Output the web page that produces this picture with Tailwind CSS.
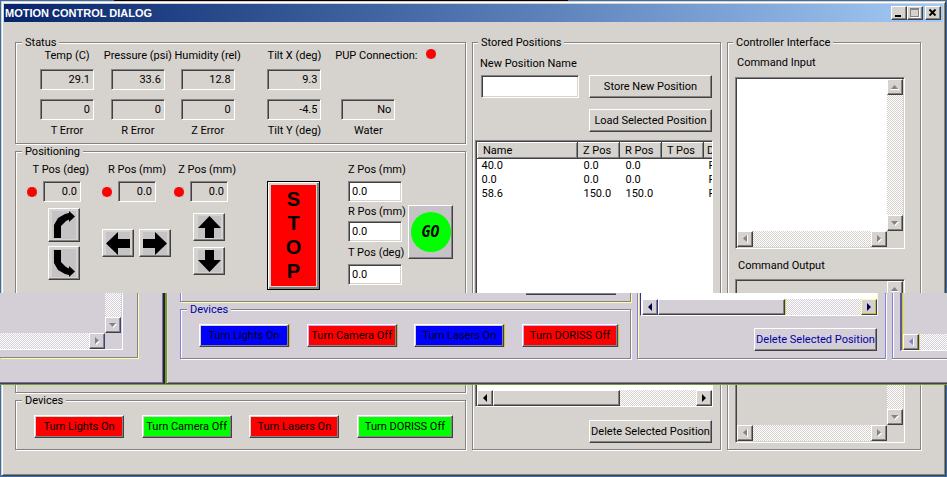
<!DOCTYPE html>
<html lang="en">
<head>
    <meta charset="UTF-8">
    <meta name="viewport" content="width=device-width, initial-scale=1.0">
    <title>Motion Control Dialog</title>
    <script src="https://cdn.jsdelivr.net/npm/@tailwindcss/browser@4"></script>
</head>
<body class="bg-[#3a6ea5] font-[Roboto,'Liberation_Sans',sans-serif] text-[11px] leading-[14px] text-black">

    <!-- Shared glyphs -->
    <svg class="hidden">
        <symbol id="tri-up" viewBox="0 0 8 8"><path d="M0 7h8v-1H0z" fill="#fff"/><path d="M0 6 3.500 2 7 6z"/></symbol>
        <symbol id="tri-down" viewBox="0 0 8 8"><path d="M1 3h7L4.500 7z" fill="#fff"/><path d="M0 2h7L3.500 6z"/></symbol>
        <symbol id="tri-left" viewBox="0 0 8 8"><path d="M6 0h1v8H6z" fill="#fff"/><path d="M6 0v7L2 3.500z"/></symbol>
        <symbol id="tri-right" viewBox="0 0 8 8"><path d="M3 1v7l4-3.500z" fill="#fff"/><path d="M2 0v7l4-3.500z"/></symbol>
        <symbol id="solid-left" viewBox="0 0 8 8"><path d="M6 0v8L2 4z"/></symbol>
        <symbol id="solid-right" viewBox="0 0 8 8"><path d="M2 0v8l4-4z"/></symbol>
        <symbol id="led" viewBox="0 0 10 10"><path d="M0 0h10v10H0z" fill="#c6c3c6"/><circle cx="5" cy="5" r="5" fill="#f00"/></symbol>
    </svg>

    <div class="relative flex min-h-screen flex-col">
        <div class="mr-[40%] ml-[12%] h-px bg-black"></div>

        <div class="mx-px mb-px flex flex-1 flex-col border border-[#d6d3ce] border-r-[#424142] border-b-[#424142] bg-[#d6d3ce] p-[2px] shadow-[inset_1px_1px_0_#fff,inset_-1px_-1px_0_#848284]">
            <!-- Title bar -->
            <header class="flex h-[18px] items-center justify-between bg-linear-to-r from-[#08246b] to-[#a5cbf7] pr-[2px] pl-px">
                <h1 class="font-['Liberation_Sans',Arial,sans-serif] font-bold text-white">MOTION CONTROL DIALOG</h1>
                <div class="flex">
                    <button type="button" aria-label="Minimize" class="flex h-[14px] w-4 items-center justify-center border border-white border-r-[#424142] border-b-[#424142] bg-[#d6d3ce] shadow-[inset_-1px_-1px_0_#848284]"><svg class="h-[10px] w-[10px]" viewBox="0 0 10 10"><path d="M1 7h6v2H1z"/></svg></button>
                    <button type="button" aria-label="Maximize" disabled class="flex h-[14px] w-4 items-center justify-center border border-white border-r-[#424142] border-b-[#424142] bg-[#d6d3ce] shadow-[inset_-1px_-1px_0_#848284]"><svg class="h-[10px] w-[10px]" viewBox="0 0 10 10"><path d="M1 1h9v9H1z" fill="#fff"/><path d="M0 0h9v9H0z" fill="#848284"/><path d="M1 2h7v6H1z" fill="#d6d3ce"/></svg></button>
                    <button type="button" aria-label="Close" class="ml-[2px] flex h-[14px] w-4 items-center justify-center border border-white border-r-[#424142] border-b-[#424142] bg-[#d6d3ce] shadow-[inset_-1px_-1px_0_#848284]"><svg class="h-[10px] w-[10px]" viewBox="0 0 10 10"><path d="M1.500 1.500l6 6M7.500 1.500l-6 6" stroke="#000" stroke-width="1.800"/></svg></button>
                </div>
            </header>

            <main class="grid flex-1 grid-cols-[451fr_249fr_194fr] gap-x-[6px] pt-[14px] pr-[22px] pb-[23px] pl-[11px]">
                <div class="flex min-w-0 flex-col">
                    <!-- Status -->
                    <fieldset class="min-w-0 border border-[#848284] pb-[5px] pl-6 shadow-[1px_1px_0_#fff,inset_1px_1px_0_#fff]">
                        <legend class="-ml-[18px] bg-[#d6d3ce] px-[3px] leading-[13px]">Status</legend>
                        <div class="grid grid-cols-[71fr_70fr_87fr_68fr_130fr] gap-y-[9px]">
                            <div class="flex w-[54px] flex-col items-center gap-[6px]">
                                <label for="temp" class="whitespace-nowrap">Temp (C)</label>
                                <input id="temp" readonly value="29.1" class="h-[21px] w-full border border-[#848284] border-r-white border-b-white px-[3px] text-right shadow-[inset_1px_1px_0_#424142]">
                            </div>
                            <div class="flex w-[54px] flex-col items-center gap-[6px]">
                                <label for="pressure" class="whitespace-nowrap">Pressure (psi)</label>
                                <input id="pressure" readonly value="33.6" class="h-[21px] w-full border border-[#848284] border-r-white border-b-white px-[3px] text-right shadow-[inset_1px_1px_0_#424142]">
                            </div>
                            <div class="flex w-[54px] flex-col items-center gap-[6px]">
                                <label for="humidity" class="whitespace-nowrap">Humidity (rel)</label>
                                <input id="humidity" readonly value="12.8" class="h-[21px] w-full border border-[#848284] border-r-white border-b-white px-[3px] text-right shadow-[inset_1px_1px_0_#424142]">
                            </div>
                            <div class="flex w-[54px] flex-col items-center gap-[6px]">
                                <label for="tilt-x" class="whitespace-nowrap">Tilt X (deg)</label>
                                <input id="tilt-x" readonly value="9.3" class="h-[21px] w-full border border-[#848284] border-r-white border-b-white px-[3px] text-right shadow-[inset_1px_1px_0_#424142]">
                            </div>
                            <div class="flex items-start gap-2 whitespace-nowrap">
                                <span>PUP Connection:</span>
                                <svg class="h-[10px] w-[10px]"><use href="#led"/></svg>
                            </div>
                            <div class="flex w-[54px] flex-col items-center gap-1">
                                <input id="t-error" readonly value="0" class="h-[21px] w-full border border-[#848284] border-r-white border-b-white px-[3px] text-right shadow-[inset_1px_1px_0_#424142]">
                                <label for="t-error">T Error</label>
                            </div>
                            <div class="flex w-[54px] flex-col items-center gap-1">
                                <input id="r-error" readonly value="0" class="h-[21px] w-full border border-[#848284] border-r-white border-b-white px-[3px] text-right shadow-[inset_1px_1px_0_#424142]">
                                <label for="r-error">R Error</label>
                            </div>
                            <div class="flex w-[54px] flex-col items-center gap-1">
                                <input id="z-error" readonly value="0" class="h-[21px] w-full border border-[#848284] border-r-white border-b-white px-[3px] text-right shadow-[inset_1px_1px_0_#424142]">
                                <label for="z-error">Z Error</label>
                            </div>
                            <div class="flex w-[54px] flex-col items-center gap-1">
                                <input id="tilt-y" readonly value="-4.5" class="h-[21px] w-full border border-[#848284] border-r-white border-b-white px-[3px] text-right shadow-[inset_1px_1px_0_#424142]">
                                <label for="tilt-y" class="whitespace-nowrap">Tilt Y (deg)</label>
                            </div>
                            <div class="ml-[6px] flex w-[54px] flex-col items-center gap-1">
                                <input id="water" readonly value="No" class="h-[21px] w-full border border-[#848284] border-r-white border-b-white px-[3px] text-right shadow-[inset_1px_1px_0_#424142]">
                                <label for="water">Water</label>
                            </div>
                        </div>
                    </fieldset>

                    <!-- Positioning -->
                    <fieldset class="mt-px flex min-w-0 flex-1 flex-col justify-between border border-[#848284] pl-[11px] shadow-[1px_1px_0_#fff,inset_1px_1px_0_#fff]">
                        <legend class="-ml-[5px] bg-[#d6d3ce] px-[3px] leading-[13px]">Positioning</legend>
                        <div class="grid grid-cols-[75fr_72fr_93fr_81fr_60fr_57fr] pt-[5px]">
                            <div class="flex w-[62px] flex-col">
                                <label for="t-now" class="text-right whitespace-nowrap">T Pos (deg)</label>
                                <div class="mt-1 flex items-center gap-[6px]">
                                    <svg class="h-[10px] w-[10px] shrink-0"><use href="#led"/></svg>
                                    <input id="t-now" readonly value="0.0" class="h-[21px] w-[38px] border border-[#848284] border-r-white border-b-white px-[3px] text-right shadow-[inset_1px_1px_0_#424142]">
                                </div>
                                <button type="button" aria-label="Rotate clockwise" class="mt-[6px] ml-[21px] flex h-[34px] w-8 items-center justify-center border border-white border-r-[#424142] border-b-[#424142] shadow-[inset_-1px_-1px_0_#848284]">
                                    <svg class="h-7 w-6 bg-[#c6c3c6]" viewBox="0 0 24 28"><path d="M2 27V14l4-7 7-4 4-1V0l6 5.500-6 5.500V8.500L14 10l-5 5v12z"/></svg>
                                </button>
                                <button type="button" aria-label="Rotate counterclockwise" class="mt-1 ml-[21px] flex h-[34px] w-8 items-center justify-center border border-white border-r-[#424142] border-b-[#424142] shadow-[inset_-1px_-1px_0_#848284]">
                                    <svg class="h-7 w-6 bg-[#c6c3c6]" viewBox="0 0 24 28"><path d="M2 1v13l4 7 7 4 4 1v2l6-5.500-6-5.500v2.500L14 18l-5-5V1z"/></svg>
                                </button>
                            </div>
                            <div class="flex w-[70px] flex-col">
                                <label for="r-now" class="text-center whitespace-nowrap">R Pos (mm)</label>
                                <div class="mt-1 flex items-center gap-[6px]">
                                    <svg class="h-[10px] w-[10px] shrink-0"><use href="#led"/></svg>
                                    <input id="r-now" readonly value="0.0" class="h-[21px] w-[38px] border border-[#848284] border-r-white border-b-white px-[3px] text-right shadow-[inset_1px_1px_0_#424142]">
                                </div>
                                <div class="mt-[27px] flex gap-[5px]">
                                    <button type="button" aria-label="Move left" class="flex h-7 w-8 items-center justify-center border border-white border-r-[#424142] border-b-[#424142] shadow-[inset_-1px_-1px_0_#848284]">
                                        <svg class="h-[23px] w-6 bg-[#c6c3c6]" viewBox="0 0 24 23"><path d="M0 11.500 12 0v7h12v9H12v7z"/></svg>
                                    </button>
                                    <button type="button" aria-label="Move right" class="flex h-7 w-8 items-center justify-center border border-white border-r-[#424142] border-b-[#424142] shadow-[inset_-1px_-1px_0_#848284]">
                                        <svg class="h-[23px] w-6 bg-[#c6c3c6]" viewBox="0 0 24 23"><path d="M24 11.500 12 0v7H0v9h12v7z"/></svg>
                                    </button>
                                </div>
                            </div>
                            <div class="flex w-[62px] flex-col">
                                <label for="z-now" class="text-right whitespace-nowrap">Z Pos (mm)</label>
                                <div class="mt-1 flex items-center gap-[6px]">
                                    <svg class="h-[10px] w-[10px] shrink-0"><use href="#led"/></svg>
                                    <input id="z-now" readonly value="0.0" class="h-[21px] w-[38px] border border-[#848284] border-r-white border-b-white px-[3px] text-right shadow-[inset_1px_1px_0_#424142]">
                                </div>
                                <button type="button" aria-label="Move up" class="mt-[11px] ml-[19px] flex h-7 w-8 items-center justify-center border border-white border-r-[#424142] border-b-[#424142] shadow-[inset_-1px_-1px_0_#848284]">
                                    <svg class="h-[22px] w-[23px] bg-[#c6c3c6]" viewBox="0 0 23 22"><path d="M11.500 0 23 12h-7v10H7V12H0z"/></svg>
                                </button>
                                <button type="button" aria-label="Move down" class="mt-[6px] ml-[19px] flex h-7 w-8 items-center justify-center border border-white border-r-[#424142] border-b-[#424142] shadow-[inset_-1px_-1px_0_#848284]">
                                    <svg class="h-[22px] w-[23px] bg-[#c6c3c6]" viewBox="0 0 23 22"><path d="M11.500 22 23 10h-7V0H7v10H0z"/></svg>
                                </button>
                            </div>
                            <div class="pt-[18px]">
                                <button type="button" class="flex h-[109px] w-[53px] border border-black bg-[#d6d3ce] p-[3px] shadow-[inset_1px_1px_0_#fff,inset_-2px_-2px_0_#848284]">
                                    <span class="flex h-full w-full flex-col items-center justify-center bg-[#f00] pb-[2px] font-['Liberation_Sans',Arial,sans-serif] text-xl leading-6 font-bold"><span>S</span><span>T</span><span>O</span><span>P</span></span>
                                </button>
                            </div>
                            <div class="flex w-[54px] flex-col">
                                <label for="z-go" class="mb-1 whitespace-nowrap">Z Pos (mm)</label>
                                <input id="z-go" value="0.0" class="h-[21px] w-full border border-[#848284] border-r-white border-b-white bg-white px-[3px] shadow-[inset_1px_1px_0_#424142,inset_-1px_-1px_0_#d6d3ce]">
                                <label for="r-go" class="mt-[3px] mb-[2px] whitespace-nowrap">R Pos (mm)</label>
                                <input id="r-go" value="0.0" class="h-[21px] w-full border border-[#848284] border-r-white border-b-white bg-white px-[3px] shadow-[inset_1px_1px_0_#424142,inset_-1px_-1px_0_#d6d3ce]">
                                <label for="t-go" class="mt-1 mb-1 whitespace-nowrap">T Pos (deg)</label>
                                <input id="t-go" value="0.0" class="h-[21px] w-full border border-[#848284] border-r-white border-b-white bg-white px-[3px] shadow-[inset_1px_1px_0_#424142,inset_-1px_-1px_0_#d6d3ce]">
                            </div>
                            <div class="pt-[42px]">
                                <button type="button" class="flex h-[54px] w-[45px] items-center justify-center border border-white border-r-[#424142] border-b-[#424142] bg-[#c6c3c6] shadow-[inset_-1px_-1px_0_#848284]">
                                    <span class="flex h-10 w-10 items-center justify-center rounded-full bg-[#0f0] font-['DejaVu_Sans_Mono',monospace] text-[15px] font-bold italic">GO</span>
                                </button>
                            </div>
                        </div>
                        <button type="button" class="mr-[14px] mb-[7px] h-[23px] w-[90px] self-end border border-white border-r-[#424142] border-b-[#424142] shadow-[inset_-1px_-1px_0_#848284]"></button>
                    </fieldset>

                    <!-- Devices -->
                    <fieldset class="mt-px min-w-0 border border-[#848284] pb-[11px] pl-[11px] shadow-[1px_1px_0_#fff,inset_1px_1px_0_#fff]">
                        <legend class="-ml-[5px] bg-[#d6d3ce] px-[3px] leading-[13px]">Devices</legend>
                        <div class="flex justify-between pt-2 pr-3 pl-[7px] whitespace-nowrap">
                            <button type="button" class="h-[23px] w-[90px] border border-white border-r-[#424142] border-b-[#424142] bg-[#f00] shadow-[inset_-1px_-1px_0_#848284,inset_1px_1px_0_#d6d3ce]">Turn Lights On</button>
                            <button type="button" class="h-[23px] w-[90px] border border-white border-r-[#424142] border-b-[#424142] bg-[#0f0] shadow-[inset_-1px_-1px_0_#848284,inset_1px_1px_0_#d6d3ce]">Turn Camera Off</button>
                            <button type="button" class="h-[23px] w-[90px] border border-white border-r-[#424142] border-b-[#424142] bg-[#f00] shadow-[inset_-1px_-1px_0_#848284,inset_1px_1px_0_#d6d3ce]">Turn Lasers On</button>
                            <button type="button" class="h-[23px] w-24 border border-white border-r-[#424142] border-b-[#424142] bg-[#0f0] shadow-[inset_-1px_-1px_0_#848284,inset_1px_1px_0_#d6d3ce]">Turn DORISS Off</button>
                        </div>
                    </fieldset>
                </div>

                <!-- Stored Positions -->
                <fieldset class="flex min-w-0 flex-col border border-[#848284] pr-[7px] pb-[6px] pl-[2px] shadow-[1px_1px_0_#fff,inset_1px_1px_0_#fff]">
                    <legend class="ml-[3px] bg-[#d6d3ce] px-[3px] leading-[13px]">Stored Positions</legend>
                    <label for="new-name" class="mt-2 mb-1 ml-[5px]">New Position Name</label>
                    <div class="flex justify-between pl-[6px]">
                        <input id="new-name" class="h-[23px] w-[98px] border border-[#848284] border-r-white border-b-white bg-white px-1 shadow-[inset_1px_1px_0_#424142,inset_-1px_-1px_0_#d6d3ce]">
                        <button type="button" class="mr-px h-[23px] w-[123px] border border-white border-r-[#424142] border-b-[#424142] whitespace-nowrap shadow-[inset_-1px_-1px_0_#848284]">Store New Position</button>
                    </div>
                    <button type="button" class="mt-[11px] mr-px h-[23px] w-[123px] self-end border border-white border-r-[#424142] border-b-[#424142] whitespace-nowrap shadow-[inset_-1px_-1px_0_#848284]">Load Selected Position</button>
                    <div class="mt-2 flex flex-1 flex-col overflow-hidden border border-[#848284] border-r-white border-b-white bg-white pt-px pl-px shadow-[inset_1px_1px_0_#424142]">
                        <div class="flex-1 overflow-hidden">
                            <table class="w-[286px] table-fixed text-left">
                                <colgroup><col class="w-[100px]"><col class="w-[42px]"><col class="w-[42px]"><col class="w-[42px]"><col class="w-[60px]"></colgroup>
                                <thead class="bg-[#d6d3ce]">
                                    <tr class="h-4">
                                        <th class="border border-white border-r-[#424142] border-b-[#424142] pl-[5px] font-normal shadow-[inset_-1px_-1px_0_#848284]">Name</th>
                                        <th class="border border-white border-r-[#424142] border-b-[#424142] pl-[5px] font-normal shadow-[inset_-1px_-1px_0_#848284]">Z Pos</th>
                                        <th class="border border-white border-r-[#424142] border-b-[#424142] pl-[5px] font-normal shadow-[inset_-1px_-1px_0_#848284]">R Pos</th>
                                        <th class="border border-white border-r-[#424142] border-b-[#424142] pl-[5px] font-normal shadow-[inset_-1px_-1px_0_#848284]">T Pos</th>
                                        <th class="border border-white border-r-[#424142] border-b-[#424142] pl-[3px] font-normal shadow-[inset_-1px_-1px_0_#848284]">D</th>
                                    </tr>
                                </thead>
                                <tbody>
                                    <tr><td class="pl-1">40.0</td><td class="pl-[6px]">0.0</td><td class="pl-[6px]">0.0</td><td></td><td class="pl-[5px]">F</td></tr>
                                    <tr><td class="pl-1">0.0</td><td class="pl-[6px]">0.0</td><td class="pl-[6px]">0.0</td><td></td><td class="pl-[5px]">F</td></tr>
                                    <tr><td class="pl-1">58.6</td><td class="pl-[6px]">150.0</td><td class="pl-[6px]">150.0</td><td></td><td class="pl-[5px]">F</td></tr>
                                </tbody>
                            </table>
                        </div>
                        <div class="flex h-4 bg-[repeating-conic-gradient(#fff_0_25%,#d6d3ce_0_50%)] bg-size-[2px_2px]">
                            <button type="button" aria-label="Scroll left" class="flex h-4 w-4 items-center justify-center border border-white border-r-[#424142] border-b-[#424142] bg-[#d6d3ce] shadow-[inset_-1px_-1px_0_#848284]"><svg class="h-2 w-2"><use href="#solid-left"/></svg></button>
                            <div class="w-[127px] border border-white border-r-[#424142] border-b-[#424142] bg-[#d6d3ce] shadow-[inset_-1px_-1px_0_#848284]"></div>
                            <button type="button" aria-label="Scroll right" class="ml-auto flex h-4 w-4 items-center justify-center border border-white border-r-[#424142] border-b-[#424142] bg-[#d6d3ce] shadow-[inset_-1px_-1px_0_#848284]"><svg class="h-2 w-2"><use href="#solid-right"/></svg></button>
                        </div>
                    </div>
                    <button type="button" class="mt-[13px] mr-px h-[23px] w-[123px] self-end border border-white border-r-[#424142] border-b-[#424142] whitespace-nowrap shadow-[inset_-1px_-1px_0_#848284]">Delete Selected Position</button>
                </fieldset>

                <!-- Controller Interface -->
                <fieldset class="flex min-w-0 flex-col border border-[#848284] pr-[15px] pb-[6px] pl-[7px] shadow-[1px_1px_0_#fff,inset_1px_1px_0_#fff]">
                    <legend class="-ml-[2px] bg-[#d6d3ce] px-[3px] leading-[13px]">Controller Interface</legend>
                    <label for="command-input" class="mt-[7px] mb-[7px] ml-[2px]">Command Input</label>
                    <div class="grid flex-[172] grid-cols-[1fr_16px] grid-rows-[1fr_16px] border border-[#848284] border-r-white border-b-white p-px shadow-[inset_1px_1px_0_#424142]">
                        <textarea id="command-input" class="h-full w-full resize-none overflow-hidden bg-white px-1"></textarea>
                        <div class="flex flex-col justify-between bg-[repeating-conic-gradient(#fff_0_25%,#d6d3ce_0_50%)] bg-size-[2px_2px]">
                            <button type="button" disabled aria-label="Scroll up" class="flex h-4 w-4 items-center justify-center border border-white border-r-[#424142] border-b-[#424142] bg-[#d6d3ce] shadow-[inset_-1px_-1px_0_#848284]"><svg class="h-2 w-2 fill-[#848284]"><use href="#tri-up"/></svg></button>
                            <button type="button" disabled aria-label="Scroll down" class="flex h-4 w-4 items-center justify-center border border-white border-r-[#424142] border-b-[#424142] bg-[#d6d3ce] shadow-[inset_-1px_-1px_0_#848284]"><svg class="h-2 w-2 fill-[#848284]"><use href="#tri-down"/></svg></button>
                        </div>
                        <div class="flex justify-between bg-[repeating-conic-gradient(#fff_0_25%,#d6d3ce_0_50%)] bg-size-[2px_2px]">
                            <button type="button" disabled aria-label="Scroll left" class="flex h-4 w-4 items-center justify-center border border-white border-r-[#424142] border-b-[#424142] bg-[#d6d3ce] shadow-[inset_-1px_-1px_0_#848284]"><svg class="h-2 w-2 fill-[#848284]"><use href="#tri-left"/></svg></button>
                            <button type="button" disabled aria-label="Scroll right" class="flex h-4 w-4 items-center justify-center border border-white border-r-[#424142] border-b-[#424142] bg-[#d6d3ce] shadow-[inset_-1px_-1px_0_#848284]"><svg class="h-2 w-2 fill-[#848284]"><use href="#tri-right"/></svg></button>
                        </div>
                    </div>
                    <label for="command-output" class="mt-[10px] mb-[6px] ml-[3px]">Command Output</label>
                    <div class="grid flex-[163] grid-cols-[1fr_16px] grid-rows-[1fr_16px] border border-[#848284] border-r-white border-b-white p-px shadow-[inset_1px_1px_0_#424142]">
                        <textarea id="command-output" readonly class="h-full w-full resize-none overflow-hidden px-1"></textarea>
                        <div class="flex flex-col justify-between bg-[repeating-conic-gradient(#fff_0_25%,#d6d3ce_0_50%)] bg-size-[2px_2px]">
                            <button type="button" disabled aria-label="Scroll up" class="flex h-4 w-4 items-center justify-center border border-white border-r-[#424142] border-b-[#424142] bg-[#d6d3ce] shadow-[inset_-1px_-1px_0_#848284]"><svg class="h-2 w-2 fill-[#848284]"><use href="#tri-up"/></svg></button>
                            <button type="button" disabled aria-label="Scroll down" class="flex h-4 w-4 items-center justify-center border border-white border-r-[#424142] border-b-[#424142] bg-[#d6d3ce] shadow-[inset_-1px_-1px_0_#848284]"><svg class="h-2 w-2 fill-[#848284]"><use href="#tri-down"/></svg></button>
                        </div>
                        <div class="flex justify-between bg-[repeating-conic-gradient(#fff_0_25%,#d6d3ce_0_50%)] bg-size-[2px_2px]">
                            <button type="button" disabled aria-label="Scroll left" class="flex h-4 w-4 items-center justify-center border border-white border-r-[#424142] border-b-[#424142] bg-[#d6d3ce] shadow-[inset_-1px_-1px_0_#848284]"><svg class="h-2 w-2 fill-[#848284]"><use href="#tri-left"/></svg></button>
                            <button type="button" disabled aria-label="Scroll right" class="flex h-4 w-4 items-center justify-center border border-white border-r-[#424142] border-b-[#424142] bg-[#d6d3ce] shadow-[inset_-1px_-1px_0_#848284]"><svg class="h-2 w-2 fill-[#848284]"><use href="#tri-right"/></svg></button>
                        </div>
                    </div>
                </fieldset>
            </main>
        </div>

        <!-- Band of two shifted dialogs lying across the window -->
        <div class="absolute inset-x-0 top-[293px] flex h-[92px] overflow-hidden border-b border-[#739e42] bg-[#d4ced6]">
            <div class="w-[165px] shrink-0 border-r-2 border-b border-r-[#21204a] border-b-[#424142] shadow-[inset_-1px_-1px_0_#73719c]">
                <div class="h-[65px] w-[138px] border-r border-b border-[#848284] shadow-[1px_1px_0_#ffffa5]">
                    <div class="grid h-[57px] w-[123px] grid-cols-[1fr_16px] grid-rows-[1fr_16px] border-r border-b border-white pr-px">
                        <div></div>
                        <div class="flex flex-col justify-end bg-[repeating-conic-gradient(#fff_0_25%,#d4ced6_0_50%)] bg-size-[2px_2px]">
                            <button type="button" disabled aria-label="Scroll down" class="flex h-4 w-4 items-center justify-center border border-white border-r-[#42417b] border-b-[#424142] bg-[#d4ced6] shadow-[inset_-1px_-1px_0_#848284]"><svg class="h-2 w-2 fill-[#848284]"><use href="#tri-down"/></svg></button>
                        </div>
                        <div class="flex justify-end bg-[repeating-conic-gradient(#fff_0_25%,#d4ced6_0_50%)] bg-size-[2px_2px]">
                            <button type="button" disabled aria-label="Scroll right" class="flex h-4 w-4 items-center justify-center border border-white border-r-[#42417b] border-b-[#424142] bg-[#d4ced6] shadow-[inset_-1px_-1px_0_#848284]"><svg class="h-2 w-2 fill-[#848284]"><use href="#tri-right"/></svg></button>
                        </div>
                    </div>
                </div>
            </div>
            <div class="flex min-w-0 flex-1 gap-[6px] border-b border-l-2 border-b-[#424142] border-l-[#7b9e08] pl-[13px] shadow-[inset_1px_0_0_#d6d3ff,inset_0_-1px_0_#848284]">
                <div class="w-[451px] shrink-0">
                    <div class="flex h-[9px] justify-end border-x border-b border-[#848284] border-l-[#8482de] pr-[14px] shadow-[1px_1px_0_#ffffa5,inset_1px_0_0_#fff]">
                        <div class="h-[2px] w-[90px] border-b border-[#424142] bg-[#848284]"></div>
                    </div>
                    <fieldset class="mt-px min-w-0 border border-[#848284] border-l-[#8482de] pb-[11px] pl-[11px] shadow-[1px_1px_0_#fff,inset_1px_1px_0_#fff]">
                        <legend class="-ml-[5px] bg-[#d4ced6] px-[3px] leading-[13px] text-[#0000a5]">Devices</legend>
                        <div class="flex justify-between pt-2 pr-3 pl-[7px] whitespace-nowrap">
                            <button type="button" class="h-[23px] w-[90px] border border-white border-r-[#424142] border-b-[#424142] bg-[#00f] shadow-[inset_-1px_-1px_0_#848284,inset_1px_1px_0_#d6d3ce,1px_0_0_#cebe31]">Turn Lights On</button>
                            <button type="button" class="h-[23px] w-[90px] border border-white border-r-[#42417b] border-b-[#424142] bg-[#f00] shadow-[inset_-1px_-1px_0_#848284,inset_1px_1px_0_#d6a2ff,1px_0_0_#cebe31]">Turn Camera Off</button>
                            <button type="button" class="h-[23px] w-[90px] border border-white border-r-[#424142] border-b-[#424142] bg-[#00f] shadow-[inset_-1px_-1px_0_#848284,inset_1px_1px_0_#d6d3ce,1px_0_0_#cebe31]">Turn Lasers On</button>
                            <button type="button" class="h-[23px] w-24 border border-white border-r-[#42417b] border-b-[#424142] bg-[#f00] shadow-[inset_-1px_-1px_0_#848284,inset_1px_1px_0_#d6a2ff,1px_0_0_#cebe31]">Turn DORISS Off</button>
                        </div>
                    </fieldset>
                </div>
                <div class="flex h-[66px] w-[249px] shrink-0 flex-col border-x border-b border-[#848284] border-x-[#8482de] pr-[7px] pl-[2px] shadow-[inset_1px_0_0_#ffffa5,1px_1px_0_#fff]">
                    <div class="flex h-[23px] flex-col justify-end border border-t-0 border-r-[#ffffa5] border-b-white border-l-[#31309c] bg-white pl-px">
                        <div class="flex h-4 bg-[repeating-conic-gradient(#fff_0_25%,#d4ced6_0_50%)] bg-size-[2px_2px]">
                            <button type="button" aria-label="Scroll left" class="flex h-4 w-4 items-center justify-center border border-white border-r-[#31309c] border-b-[#424142] bg-[#d4ced6] shadow-[inset_-1px_-1px_0_#848284]"><svg class="h-2 w-2 fill-[#000042]"><use href="#solid-left"/></svg></button>
                            <div class="w-[127px] border border-white border-r-[#31309c] border-b-[#424142] bg-[#d4ced6] shadow-[inset_-1px_-1px_0_#848284,1px_0_0_#dedb00]"></div>
                            <button type="button" aria-label="Scroll right" class="ml-auto flex h-4 w-4 items-center justify-center border border-[#ffffa5] border-r-[#31309c] border-b-[#424142] bg-[#d4ced6] shadow-[inset_-1px_-1px_0_#c6be42]"><svg class="h-2 w-2 fill-[#000042]"><use href="#solid-right"/></svg></button>
                        </div>
                    </div>
                    <button type="button" class="mt-3 mr-px h-[23px] w-[123px] shrink-0 self-end border border-white border-r-[#31309c] border-b-[#424142] whitespace-nowrap text-[#0000a5] shadow-[inset_-1px_-1px_0_#848284,1px_0_0_#dedb84]">Delete Selected Position</button>
                </div>
                <div class="h-[66px] min-w-0 flex-1 border-b border-l border-[#848284] border-l-[#8482de] pl-[7px] shadow-[inset_1px_0_0_#fff,0_1px_0_#fff]">
                    <div class="flex h-[58px] flex-col justify-end border-b border-l-2 border-b-white border-l-[#5a5994] pl-px shadow-[inset_1px_0_0_#d6cf00]">
                        <div class="flex h-4 bg-[repeating-conic-gradient(#fff_0_25%,#d4ced6_0_50%)] bg-size-[2px_2px]">
                            <button type="button" disabled aria-label="Scroll left" class="flex h-4 w-4 items-center justify-center border border-white border-r-[#31309c] border-b-[#424142] bg-[#d4ced6] shadow-[inset_-1px_-1px_0_#848284,1px_0_0_#dedb00]"><svg class="h-2 w-2 fill-[#8482c6]"><use href="#tri-left"/></svg></button>
                        </div>
                    </div>
                </div>
            </div>
        </div>
    </div>
</body>
</html>
